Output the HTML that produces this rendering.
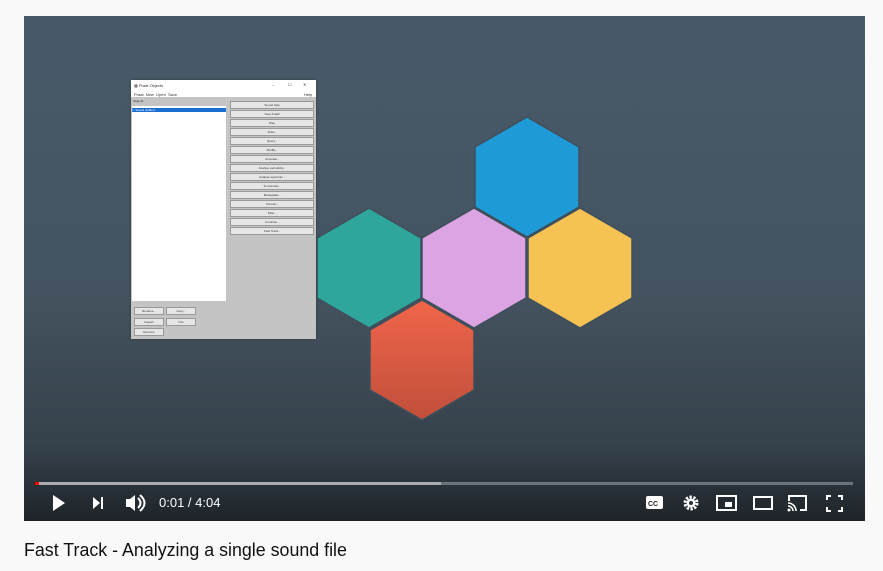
<!DOCTYPE html>
<html><head><meta charset="utf-8"><style>
body{margin:0;width:883px;height:571px;background:#f9f9f9;position:relative;overflow:hidden;font-family:"Liberation Sans",sans-serif}
#v{position:absolute;left:24px;top:16px;width:841px;height:505px;background:linear-gradient(#485a6a 0%,#44535f 55%,#35414b 85%,#1e2429 100%);overflow:hidden}
.pw{position:absolute;left:107px;top:64px;width:185px;height:259px;background:#c4c4c4;box-shadow:0 0 2px #333}
.tb{position:absolute;left:0;top:0;width:185px;height:17px;background:#fff;font-size:4px;color:#333}
.lst{position:absolute;left:1px;top:26px;width:94px;height:195px;background:#fff}
.b{position:absolute;left:99px;width:82px;height:6px;background:#e6e6e6;border:1px solid #999;font-size:3px;text-align:center;line-height:6px;color:#333}
.bb{position:absolute;width:28px;height:6px;background:#e6e6e6;border:1px solid #999;font-size:3px;text-align:center;line-height:6px;color:#333}
.ctl{position:absolute;color:#fff;font-size:13px}
</style></head><body>
<div id="v">
<svg width="841" height="505" style="position:absolute;left:0;top:0">
<defs><linearGradient id="rg" x1="0" y1="0" x2="0" y2="1"><stop offset="0" stop-color="#f0654a"/><stop offset="1" stop-color="#c14f3b"/></linearGradient></defs>
<g stroke="#3f4f5c" stroke-width="1.5" transform="translate(-24,-16)">
<polygon fill="#1e9bd7" points="527,117 579,147 579,207 527,237 475,207 475,147"/>
<polygon fill="#2fa69b" points="369,208 421,238 421,298 369,328 317,298 317,238"/>
<polygon fill="#dda4e4" points="474,208 526,238 526,298 474,328 422,298 422,238"/>
<polygon fill="#f5c253" points="580,208 632,238 632,298 580,328 528,298 528,238"/>
<polygon fill="url(#rg)" points="422,300 474,330 474,390 422,420 370,390 370,330"/>
</g>
<rect x="11" y="466" width="818" height="3" fill="#6b737a"/>
<rect x="11" y="466" width="406" height="3" fill="#a9adb0"/>
<rect x="11" y="466" width="4" height="3" fill="#f00"/>
<path d="M29 479 L41 487 L29 495Z" fill="#fff"/>
<path d="M69 481 L76 487 L69 493Z M77 481h2v12h-2z" fill="#fff"/>
<path d="M102 483h4l5-4v16l-5-4h-4z" fill="#fff"/>
<path d="M114 482 q5 5 0 10 M116 479 q9 8 0 16" stroke="#fff" stroke-width="2" fill="none"/>
<rect x="622" y="480" width="17" height="13" rx="2" fill="#fff"/>
<text x="624" y="490" font-size="7" font-weight="bold" fill="#222" font-family="Liberation Sans">CC</text>
<circle cx="667" cy="487" r="6" fill="none" stroke="#fff" stroke-width="3" stroke-dasharray="2.3 1.5"/>
<circle cx="667" cy="487" r="4.5" fill="#fff"/><circle cx="667" cy="487" r="2" fill="#2a3037"/>
<rect x="693" y="480" width="19" height="14" fill="none" stroke="#fff" stroke-width="2"/>
<rect x="701" y="486" width="7" height="5" fill="#fff"/>
<rect x="730" y="481" width="18" height="12" fill="none" stroke="#fff" stroke-width="2"/>
<path d="M765 485v-5h17v14h-6" fill="none" stroke="#fff" stroke-width="2"/>
<path d="M764 487a8 8 0 0 1 8 8M764 490a5 5 0 0 1 5 5" fill="none" stroke="#fff" stroke-width="1.6"/><circle cx="765" cy="494" r="1.5" fill="#fff"/>
<path d="M803 484v-4h4M814 480h4v4M818 491v4h-4M807 495h-4v-4" fill="none" stroke="#fff" stroke-width="2"/>
</svg>
<div class="ctl" style="left:135px;top:479px">0:01 / 4:04</div>
<div class="pw">
<div class="tb"><span style="position:absolute;left:3px;top:3px">▦ Praat Objects</span><span style="position:absolute;left:141px;top:2px">–</span><span style="position:absolute;left:157px;top:2px">☐</span><span style="position:absolute;left:172px;top:2px">✕</span>
<span style="position:absolute;left:3px;top:12px">Praat&nbsp; New&nbsp; Open&nbsp; Save</span><span style="position:absolute;left:173px;top:12px">Help</span></div>
<div style="position:absolute;left:2px;top:19px;font-size:3px;color:#333">Objects:</div>
<div class="lst"><div style="margin-top:2px;height:4px;width:94px;background:#1a6fd0;font-size:3px;color:#fff">1. Sound untitled</div></div>
<div class="b" style="top:21px">Sound help</div>
<div class="b" style="top:30px">View &amp; Edit</div>
<div class="b" style="top:39px">Play</div>
<div class="b" style="top:48px">Draw -</div>
<div class="b" style="top:57px">Query -</div>
<div class="b" style="top:66px">Modify -</div>
<div class="b" style="top:75px">Annotate -</div>
<div class="b" style="top:84px">Analyse periodicity -</div>
<div class="b" style="top:93px">Analyse spectrum -</div>
<div class="b" style="top:102px">To Intensity...</div>
<div class="b" style="top:111px">Manipulate -</div>
<div class="b" style="top:120px">Convert -</div>
<div class="b" style="top:129px">Filter -</div>
<div class="b" style="top:138px">Combine -</div>
<div class="b" style="top:147px">Fast Track -</div>
<div class="bb" style="left:3px;top:227px">Rename...</div>
<div class="bb" style="left:35px;top:227px">Copy...</div>
<div class="bb" style="left:3px;top:238px">Inspect</div>
<div class="bb" style="left:35px;top:238px">Info</div>
<div class="bb" style="left:3px;top:248px">Remove</div>
</div>
</div>
<div style="position:absolute;left:24px;top:540px;font-size:18px;color:#111;transform:scaleX(0.99);transform-origin:left">Fast Track - Analyzing a single sound file</div>
</body></html>
